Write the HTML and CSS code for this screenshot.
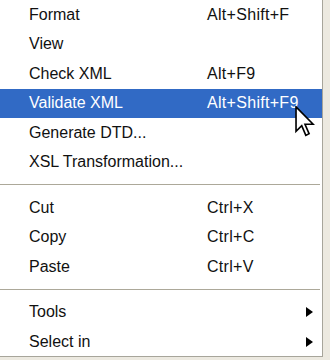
FILE: index.html
```html
<!DOCTYPE html>
<html>
  <head>
    <title>Context menu</title>
    <link rel="stylesheet" href="styles.css">
  </head>
  <body>
    <div class="menu">
      <div class="menu-item"><span class="menu-label">Format</span><span class="menu-key">Alt+Shift+F</span></div>
      <div class="menu-item"><span class="menu-label">View</span><span class="menu-key"></span></div>
      <div class="menu-item"><span class="menu-label">Check XML</span><span class="menu-key">Alt+F9</span></div>
      <div class="menu-item menu-item-active"><span class="menu-label">Validate XML</span><span class="menu-key">Alt+Shift+F9</span></div>
      <div class="menu-item"><span class="menu-label">Generate DTD...</span><span class="menu-key"></span></div>
      <div class="menu-item"><span class="menu-label">XSL Transformation...</span><span class="menu-key"></span></div>
      <div class="menu-separator"></div>
      <div class="menu-item"><span class="menu-label">Cut</span><span class="menu-key">Ctrl+X</span></div>
      <div class="menu-item"><span class="menu-label">Copy</span><span class="menu-key">Ctrl+C</span></div>
      <div class="menu-item"><span class="menu-label">Paste</span><span class="menu-key">Ctrl+V</span></div>
      <div class="menu-separator"></div>
      <div class="menu-item"><span class="menu-label">Tools</span><span class="menu-key"></span><span class="menu-arrow"></span></div>
      <div class="menu-item"><span class="menu-label">Select in</span><span class="menu-key"></span><span class="menu-arrow"></span></div>
    </div>
    <svg class="cursor" width="20" height="31" viewBox="0 0 12 19">
      <path d="M0.5 0.5 L0.5 15.5 L4 12 L6.5 18 L8.5 17 L6 11.2 L11 11.2 Z" fill="#fff" stroke="#000" stroke-width="1" stroke-linejoin="miter"/>
    </svg>
  </body>
</html>
```

FILE: styles.css
```css
body {
  margin: 0;
  background-color: #ece9e0;
  font-family: "Liberation Sans", Arial, sans-serif;
  font-size: 16px;
  position: relative;
  height: 360px;
  overflow: hidden;
}
.menu {
  width: 322px;
  height: 356px;
  background-color: #fff;
  border-right: 1px solid #a7a59b;
  border-bottom: 1px solid #a7a59b;
}
.menu-item {
  display: flex;
  align-items: center;
  height: 29.5px;
  padding-left: 29px;
  color: #111;
}
.menu-item-active {
  background-color: #316ac5;
  color: #fff;
}
.menu-label {
  width: 178px;
}
.menu-key {
  flex: 1;
  letter-spacing: 0.3px;
}
.menu-arrow {
  width: 0;
  height: 0;
  margin-right: 9px;
  border-top: 5px solid transparent;
  border-bottom: 5px solid transparent;
  border-left: 7px solid #000;
}
.menu-separator {
  height: 16px;
  display: flex;
  align-items: center;
  padding-right: 2px;
}
.menu-separator::before {
  content: "";
  flex: 1;
  height: 1px;
  background-color: #aca899;
  border-bottom: 1px solid #fff;
}
.cursor {
  position: absolute;
  left: 295px;
  top: 106px;
}
```
